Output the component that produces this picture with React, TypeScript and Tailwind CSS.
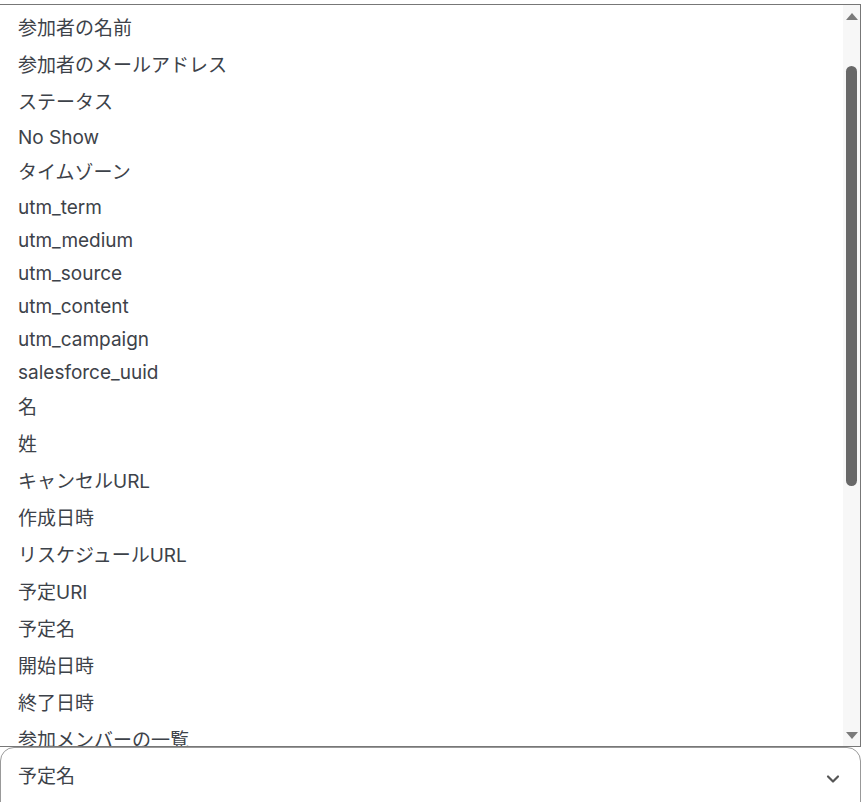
import { ChevronDown } from "lucide-react"

const fields = [
  "参加者の名前",
  "参加者のメールアドレス",
  "ステータス",
  "No Show",
  "タイムゾーン",
  "utm_term",
  "utm_medium",
  "utm_source",
  "utm_content",
  "utm_campaign",
  "salesforce_uuid",
  "名",
  "姓",
  "キャンセルURL",
  "作成日時",
  "リスケジュールURL",
  "予定URI",
  "予定名",
  "開始日時",
  "終了日時",
  "参加メンバーの一覧",
  "回答",
]

const hasCjk = (s: string) => /[^\x00-\x7f]/.test(s)

export default function App() {
  return (
    <div
      className="w-[863px] h-[802px] overflow-hidden bg-white text-[#3d4249]"
      style={{ fontFamily: 'Inter, "Noto Sans CJK JP", sans-serif' }}
    >
      <div className="pt-[4px]">
        {/* open listbox */}
        <div className="flex h-[743px] w-[861px] border-t border-r border-b border-[#777777] overflow-hidden">
          <ul className="flex-1 pt-[6px] overflow-hidden">
            {fields.map((f) => (
              <li
                key={f}
                className={`flex items-center pl-[18px] text-[19px] ${hasCjk(f) ? "h-[37px]" : "h-[33px]"}`}
              >
                {f}
              </li>
            ))}
          </ul>
          <div className="w-[17px] bg-[#f7f7f7] flex flex-col items-center">
            <div className="h-[20px] flex items-center justify-center pt-[2px]">
              <div className="w-0 h-0 border-l-[6px] border-r-[6px] border-b-[7px] border-l-transparent border-r-transparent border-b-[#7b7b7b]" />
            </div>
            <div className="mt-[41px] w-[11px] h-[420px] rounded-full bg-[#686868]" />
            <div className="flex-1" />
            <div className="h-[20px] flex items-center justify-center pb-[2px]">
              <div className="w-0 h-0 border-l-[6px] border-r-[6px] border-t-[7px] border-l-transparent border-r-transparent border-t-[#7b7b7b]" />
            </div>
          </div>
        </div>

        {/* select trigger */}
        <div className="flex items-center justify-between w-[861px] h-[70px] border border-[#999999] rounded-[14px] pl-[17px] pr-[17px] pb-[10px]">
          <span className="text-[19px]">予定名</span>
          <ChevronDown className="mt-[4px] w-[20px] h-[20px] text-[#555555]" strokeWidth={2.6} />
        </div>
      </div>
    </div>
  )
}
